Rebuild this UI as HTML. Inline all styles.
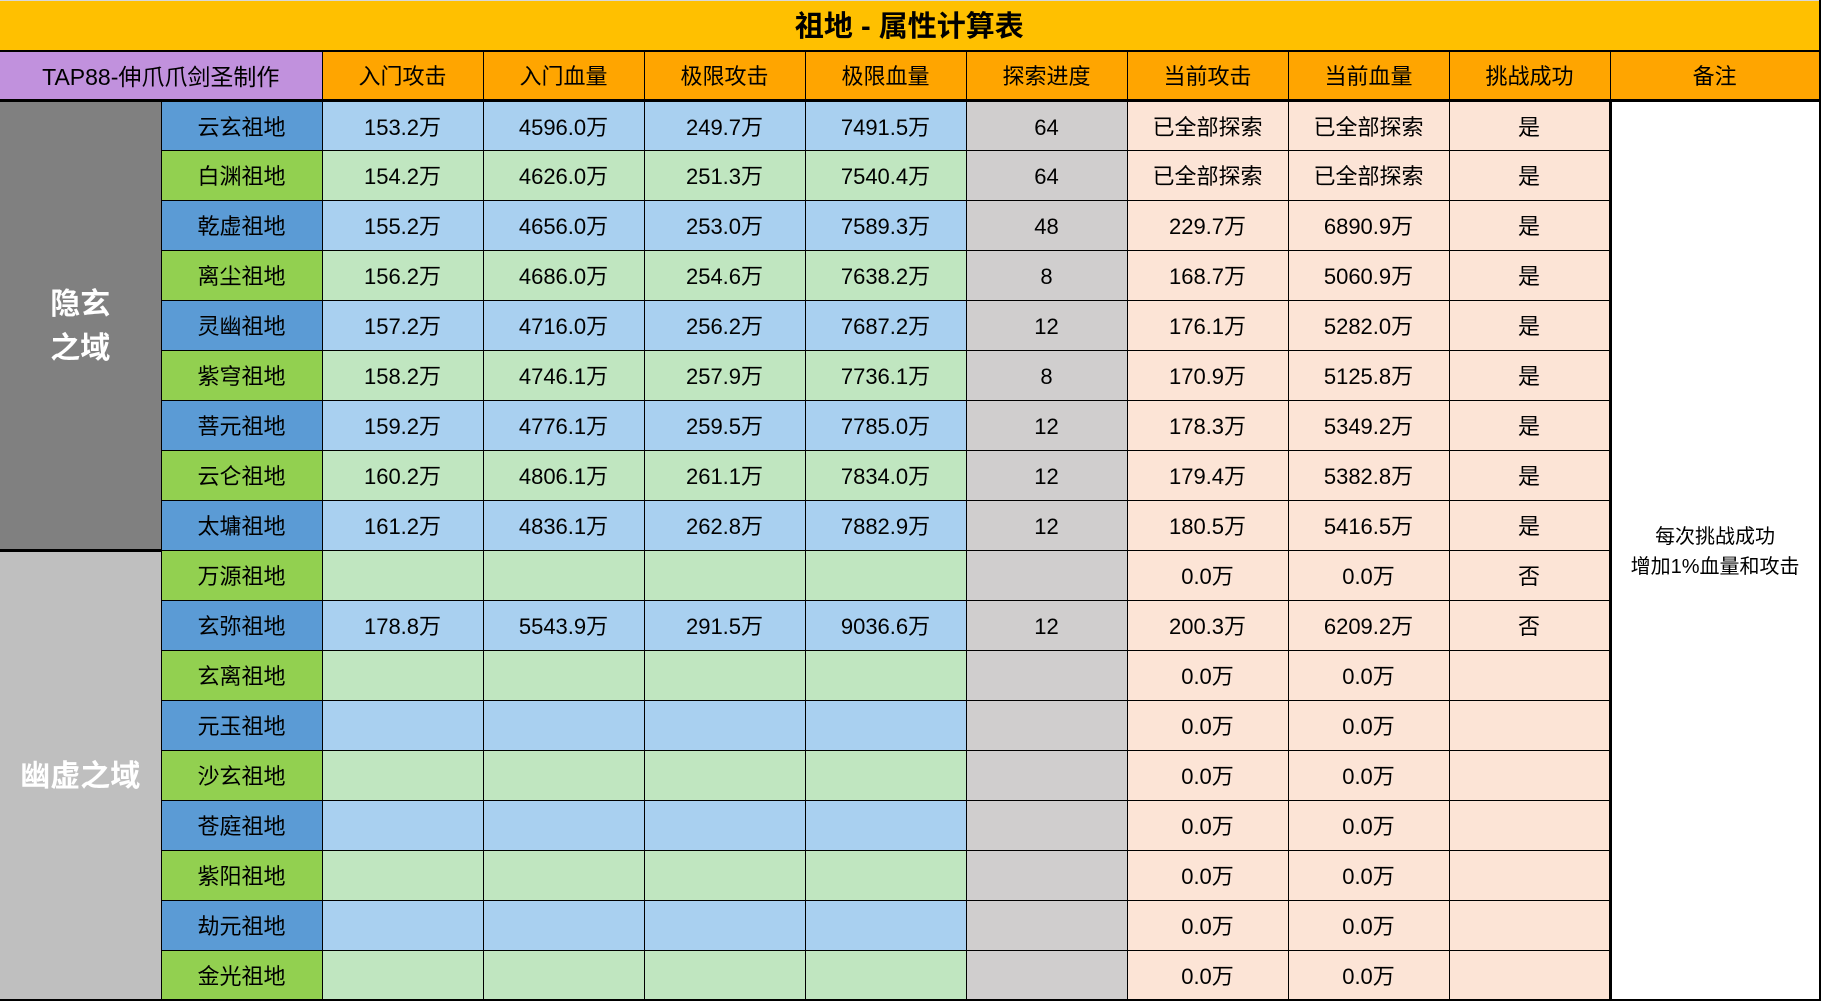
<!DOCTYPE html>
<html><head><meta charset="utf-8"><style>
html,body{margin:0;padding:0;background:#fff;width:1821px;height:1001px;overflow:hidden}
table{border-collapse:collapse;table-layout:fixed;width:1820px;font-family:"Liberation Sans","Noto Sans CJK SC",sans-serif;font-size:22px;color:#000;border-top:1px solid #d8d8d8}
tr{height:50px}
td{border:1px solid #000;padding:3px 0 0 0;text-align:center;vertical-align:middle;white-space:nowrap;overflow:hidden;line-height:24px}
.t{background:#FFC000;font-weight:bold;font-size:29px;border-right:3px solid #000;border-bottom:2px solid #000;border-top:none;border-left:none}
.h{background:#FFA500}
.p{background:#C191DD;font-size:23px}
.hr td{border-bottom:3px solid #000}
.g1{background:#808080;color:#fff;font-weight:bold;font-size:30px;line-height:44px;border-left:none}
.g2{background:#BFBFBF;color:#fff;font-weight:bold;font-size:30px;border-left:none;border-top:3px solid #000}
.nb{background:#5B9BD5}.ng{background:#92D050}
.b{background:#A9D0F0}.gr{background:#C0E6C0}.x{background:#D0CECE}.o{background:#FCE4D6}
.n{background:#fff;border-right:3px solid #000;border-left:3px solid #000;font-size:20px;line-height:30px}
</style></head><body>
<table>
<colgroup><col style="width:161px"><col style="width:161px"><col style="width:161px"><col style="width:161px"><col style="width:161px"><col style="width:161px"><col style="width:161px"><col style="width:161px"><col style="width:161px"><col style="width:161px"><col style="width:210px"></colgroup>
<tr><td class="t" colspan="11">祖地 - 属性计算表</td></tr>
<tr class="hr"><td class="p" colspan="2" style="border-left:none">TAP88-伸爪爪剑圣制作</td><td class="h">入门攻击</td><td class="h">入门血量</td><td class="h">极限攻击</td><td class="h">极限血量</td><td class="h">探索进度</td><td class="h">当前攻击</td><td class="h">当前血量</td><td class="h">挑战成功</td><td class="h" style="border-right:3px solid #000">备注</td></tr>
<tr><td class="g1" rowspan="9">隐玄<br>之域</td><td class="nb">云玄祖地</td><td class="b">153.2万</td><td class="b">4596.0万</td><td class="b">249.7万</td><td class="b">7491.5万</td><td class="x">64</td><td class="o">已全部探索</td><td class="o">已全部探索</td><td class="o">是</td><td class="n" rowspan="18">每次挑战成功<br>增加1%血量和攻击</td></tr>
<tr><td class="ng">白渊祖地</td><td class="gr">154.2万</td><td class="gr">4626.0万</td><td class="gr">251.3万</td><td class="gr">7540.4万</td><td class="x">64</td><td class="o">已全部探索</td><td class="o">已全部探索</td><td class="o">是</td></tr>
<tr><td class="nb">乾虚祖地</td><td class="b">155.2万</td><td class="b">4656.0万</td><td class="b">253.0万</td><td class="b">7589.3万</td><td class="x">48</td><td class="o">229.7万</td><td class="o">6890.9万</td><td class="o">是</td></tr>
<tr><td class="ng">离尘祖地</td><td class="gr">156.2万</td><td class="gr">4686.0万</td><td class="gr">254.6万</td><td class="gr">7638.2万</td><td class="x">8</td><td class="o">168.7万</td><td class="o">5060.9万</td><td class="o">是</td></tr>
<tr><td class="nb">灵幽祖地</td><td class="b">157.2万</td><td class="b">4716.0万</td><td class="b">256.2万</td><td class="b">7687.2万</td><td class="x">12</td><td class="o">176.1万</td><td class="o">5282.0万</td><td class="o">是</td></tr>
<tr><td class="ng">紫穹祖地</td><td class="gr">158.2万</td><td class="gr">4746.1万</td><td class="gr">257.9万</td><td class="gr">7736.1万</td><td class="x">8</td><td class="o">170.9万</td><td class="o">5125.8万</td><td class="o">是</td></tr>
<tr><td class="nb">菩元祖地</td><td class="b">159.2万</td><td class="b">4776.1万</td><td class="b">259.5万</td><td class="b">7785.0万</td><td class="x">12</td><td class="o">178.3万</td><td class="o">5349.2万</td><td class="o">是</td></tr>
<tr><td class="ng">云仑祖地</td><td class="gr">160.2万</td><td class="gr">4806.1万</td><td class="gr">261.1万</td><td class="gr">7834.0万</td><td class="x">12</td><td class="o">179.4万</td><td class="o">5382.8万</td><td class="o">是</td></tr>
<tr><td class="nb">太墉祖地</td><td class="b">161.2万</td><td class="b">4836.1万</td><td class="b">262.8万</td><td class="b">7882.9万</td><td class="x">12</td><td class="o">180.5万</td><td class="o">5416.5万</td><td class="o">是</td></tr>
<tr><td class="g2" rowspan="9">幽虚之域</td><td class="ng">万源祖地</td><td class="gr"></td><td class="gr"></td><td class="gr"></td><td class="gr"></td><td class="x"></td><td class="o">0.0万</td><td class="o">0.0万</td><td class="o">否</td></tr>
<tr><td class="nb">玄弥祖地</td><td class="b">178.8万</td><td class="b">5543.9万</td><td class="b">291.5万</td><td class="b">9036.6万</td><td class="x">12</td><td class="o">200.3万</td><td class="o">6209.2万</td><td class="o">否</td></tr>
<tr><td class="ng">玄离祖地</td><td class="gr"></td><td class="gr"></td><td class="gr"></td><td class="gr"></td><td class="x"></td><td class="o">0.0万</td><td class="o">0.0万</td><td class="o"></td></tr>
<tr><td class="nb">元玉祖地</td><td class="b"></td><td class="b"></td><td class="b"></td><td class="b"></td><td class="x"></td><td class="o">0.0万</td><td class="o">0.0万</td><td class="o"></td></tr>
<tr><td class="ng">沙玄祖地</td><td class="gr"></td><td class="gr"></td><td class="gr"></td><td class="gr"></td><td class="x"></td><td class="o">0.0万</td><td class="o">0.0万</td><td class="o"></td></tr>
<tr><td class="nb">苍庭祖地</td><td class="b"></td><td class="b"></td><td class="b"></td><td class="b"></td><td class="x"></td><td class="o">0.0万</td><td class="o">0.0万</td><td class="o"></td></tr>
<tr><td class="ng">紫阳祖地</td><td class="gr"></td><td class="gr"></td><td class="gr"></td><td class="gr"></td><td class="x"></td><td class="o">0.0万</td><td class="o">0.0万</td><td class="o"></td></tr>
<tr><td class="nb">劫元祖地</td><td class="b"></td><td class="b"></td><td class="b"></td><td class="b"></td><td class="x"></td><td class="o">0.0万</td><td class="o">0.0万</td><td class="o"></td></tr>
<tr style="border-bottom:3px solid #000"><td class="ng">金光祖地</td><td class="gr"></td><td class="gr"></td><td class="gr"></td><td class="gr"></td><td class="x"></td><td class="o">0.0万</td><td class="o">0.0万</td><td class="o"></td></tr>
</table>
</body></html>
